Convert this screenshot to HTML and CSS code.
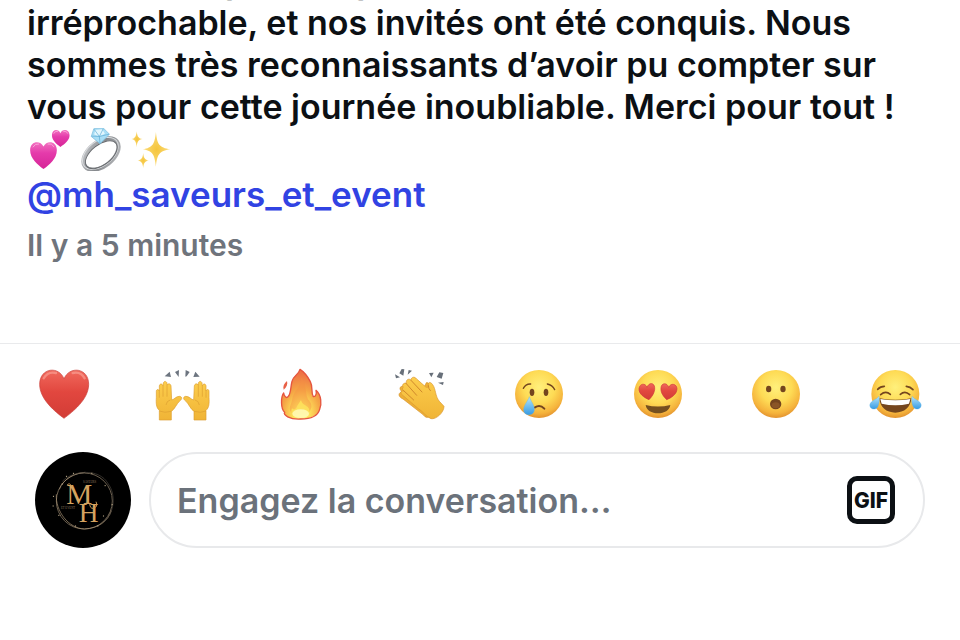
FILE: index.html
```html
<!DOCTYPE html>
<html lang="fr">
<head>
    <meta charset="UTF-8">
    <meta name="viewport" content="width=device-width, initial-scale=1.0">
    <title>Commentaires</title>
    <link rel="stylesheet" href="styles.css">
</head>
<body>
    <svg class="defs" aria-hidden="true">
        <defs>
            <linearGradient id="red" x1="0" y1="0" x2="0" y2="1">
                <stop offset="0" stop-color="#f0695c"/>
                <stop offset=".45" stop-color="#e2473f"/>
                <stop offset="1" stop-color="#d23c36"/>
            </linearGradient>
            <linearGradient id="pink" x1="0" y1="0" x2="0" y2="1">
                <stop offset="0" stop-color="#f271c0"/>
                <stop offset=".4" stop-color="#e53bab"/>
                <stop offset="1" stop-color="#d62597"/>
            </linearGradient>
            <radialGradient id="face" cx=".5" cy=".36" r=".66">
                <stop offset="0" stop-color="#fff07c"/>
                <stop offset=".5" stop-color="#fedb55"/>
                <stop offset=".82" stop-color="#f5b33c"/>
                <stop offset="1" stop-color="#df8c2c"/>
            </radialGradient>
            <linearGradient id="skin" x1="0" y1="0" x2="0" y2="1">
                <stop offset="0" stop-color="#fccd4c"/>
                <stop offset="1" stop-color="#f0b436"/>
            </linearGradient>
            <radialGradient id="flame" cx=".5" cy=".88" r=".8">
                <stop offset="0" stop-color="#fffbb0"/>
                <stop offset=".25" stop-color="#fee45c"/>
                <stop offset=".6" stop-color="#f5a545"/>
                <stop offset="1" stop-color="#ee7245"/>
            </radialGradient>
            <linearGradient id="tear" x1="0" y1="0" x2="0" y2="1">
                <stop offset="0" stop-color="#b5e4fb"/>
                <stop offset="1" stop-color="#369be3"/>
            </linearGradient>
            <linearGradient id="silver" x1="0" y1="0" x2="1" y2="1">
                <stop offset="0" stop-color="#c9cbce"/>
                <stop offset=".5" stop-color="#85888c"/>
                <stop offset="1" stop-color="#b9bbbe"/>
            </linearGradient>
            <radialGradient id="star">
                <stop offset="0" stop-color="#f5c53c"/>
                <stop offset="1" stop-color="#fbdc7c"/>
            </radialGradient>
        </defs>
    </svg>

    <main class="comment">
        <p class="comment-text">Notre mariage était grandement réussi, le service<br>irréprochable, et nos invités ont été conquis. Nous<br>sommes très reconnaissants d’avoir pu compter sur<br>vous pour cette journée inoubliable. Merci pour tout !</p>
        <div class="comment-emojis">
            <svg viewBox="21 18 138 132" role="img" aria-label="Deux cœurs">
                <path fill="url(#pink)" d="M70 144C53 131 29 112 29 86C29 58 60 54 70 75C80 54 111 58 111 86C111 112 88 131 70 144Z"/>
                <path fill="url(#pink)" d="M122 76C111 68 96 56 96 41C96 22 116 19 122 34C128 19 150 22 150 41C150 56 134 68 122 76Z"/>
                <path fill="none" stroke="#f9a3d8" stroke-width="3" stroke-linecap="round" d="M38 76Q44 65 55 67M84 67Q95 63 102 75M102 34Q106 26 113 28M132 28Q140 25 144 34"/>
            </svg>
            <svg viewBox="174 18 138 132" role="img" aria-label="Bague">
                <ellipse cx="243" cy="98" rx="62" ry="37" transform="rotate(-38 243 98)" fill="none" stroke="url(#silver)" stroke-width="13"/>
                <ellipse cx="241" cy="96" rx="63" ry="38" transform="rotate(-38 241 96)" fill="none" stroke="#dcdee0" stroke-width="3"/>
                <ellipse cx="244" cy="100" rx="57" ry="31" transform="rotate(-38 244 100)" fill="none" stroke="#6a6d71" stroke-width="3"/>
                <path fill="#a9def5" stroke="#75b9dc" stroke-width="2" d="M221 20L250 18L269 37L240 66L213 44Z"/>
                <path fill="#e2f6fd" d="M226 24L247 22L255 36L238 43L222 38Z"/>
                <path fill="none" stroke="#5aa9d2" stroke-width="2" d="M214 43L238 44L268 37M238 44L240 65M222 22L238 44L250 20"/>
            </svg>
            <svg viewBox="327 18 138 132" role="img" aria-label="Étincelles">
                <path fill="url(#star)" d="M408 30C412 68 418 78 452 83C418 88 412 98 408 137C404 98 398 88 368 83C398 78 404 68 408 30Z"/>
                <path fill="url(#star)" d="M349 28C351 46 355 50 367 52C355 54 351 58 349 77C347 58 343 54 333 52C343 50 347 46 349 28Z"/>
                <path fill="url(#star)" d="M369 95C371 112 375 116 386 118C375 120 371 124 369 141C367 124 363 120 352 118C363 116 367 112 369 95Z"/>
            </svg>
        </div>
        <a class="mention" href="#">@mh_saveurs_et_event</a>
        <time class="comment-time">Il y a 5 minutes</time>
    </main>

    <footer class="composer">
        <div class="reactions">
            <button type="button" aria-label="Cœur rouge">
                <svg viewBox="54 24 156 156">
                    <path fill="url(#red)" stroke="#c93c37" stroke-width="2" d="M132 175C108 157 59 119 59 73C59 22 118 17 132 57C147 17 206 22 206 73C206 119 156 157 132 175Z"/>
                    <path fill="none" stroke="#fa9d91" stroke-width="7" stroke-linecap="round" opacity=".7" d="M71 55Q84 33 108 39M158 39Q182 33 194 55"/>
                </svg>
            </button>
            <button type="button" aria-label="Mains levées">
                <svg viewBox="411 24 156 156">
                    <g id="hand">
                        <path fill="url(#skin)" stroke="#dc9e31" stroke-width="2" d="M418 180V151C408 143 408 128 409 113L409 94C409 87 416 87 418 93L418 78C419 70 427 70 429 78L430 69C432 62 440 63 441 70L442 75C445 69 452 71 453 78L455 120C462 119 469 108 479 109C488 111 486 118 480 122C469 132 465 147 454 154V180Z"/>
                        <path fill="none" stroke="#dc9e31" stroke-width="2" d="M418 92V113M429 78V110M441 74V110M451 120Q440 122 438 135M418 153Q434 160 454 154"/>
                    </g>
                    <use href="#hand" transform="translate(976 0) scale(-1 1)"/>
                    <path fill="#6d7580" d="M449 35L453 51L434 49ZM465 36L477 30L476 51ZM497 30L509 36L500 49L496 50ZM526 35L539 50L520 51Z"/>
                </svg>
            </button>
            <button type="button" aria-label="Feu">
                <svg viewBox="48 24 156 156">
                    <path fill="url(#flame)" stroke="#e5553f" stroke-width="4" stroke-linejoin="round" d="M125 177C91 179 71 164 77 157C65 147 65 112 74 99C76 113 84 115 88 109C96 101 95 78 99 64C103 47 119 44 123 28C136 36 146 49 154 65C163 82 155 99 163 110C171 111 173 99 171 91C188 106 188 133 182 148C177 166 156 177 125 177Z"/>
                    <path fill="#f58b44" opacity=".4" d="M126 52C148 75 134 104 151 123C162 134 159 155 139 164L102 163C84 147 97 135 99 121C104 88 129 82 126 52Z"/>
                    <path fill="#fee65b" opacity=".8" d="M126 120C130 139 148 134 151 150C151 169 136 174 124 174C104 174 92 160 99 145C105 152 112 147 114 139Z"/>
                    <ellipse cx="125" cy="161" rx="25" ry="13" fill="#fffcc0" opacity=".8"/>
                    <path fill="#e96046" d="M84 63C87 72 83 82 74 89C71 80 75 70 84 63Z"/>
                </svg>
            </button>
            <button type="button" aria-label="Applaudissements">
                <svg viewBox="402 24 156 156">
                    <path fill="#edaf36" stroke="#d7932d" stroke-width="2" d="M430 78C417 79 418 88 425 94L420 98C413 105 420 113 429 117L488 163Q501 180 511 166L506 88C515 88 509 65 499 68L491 84Z"/>
                    <path fill="url(#skin)" stroke="#d9962e" stroke-width="2" d="M430 82C424 75 432 67 439 70C437 60 445 54 453 60C454 50 464 49 470 57L495 79C500 84 506 84 505 75C504 65 512 65 518 74C528 88 525 108 538 124L552 139C552 158 528 179 513 176C496 169 488 153 475 146L427 105C419 99 424 90 433 94L428 89Q426 83 430 82Z"/>
                    <path fill="none" stroke="#d0892b" stroke-width="3" stroke-linecap="round" d="M431 92L461 120M438 70L470 106M453 61L486 96M505 77Q505 86 511 92"/>
                    <path fill="#68707a" d="M405 43L420 52L408 55ZM425 27L433 28L430 47L418 40ZM446 30L456 32L443 44ZM507 39L521 38L514 52ZM538 37L550 39L545 56L530 51ZM551 66L549 75L534 68Z"/>
                </svg>
            </button>
            <button type="button" aria-label="Visage en pleurs">
                <svg viewBox="39 24 156 156">
                    <circle cx="117" cy="102" r="72" fill="url(#face)"/>
                    <ellipse cx="96" cy="97" rx="7" ry="11" fill="#74451e"/>
                    <ellipse cx="138" cy="97" rx="7" ry="11" fill="#74451e"/>
                    <path fill="none" stroke="#74451e" stroke-width="4" stroke-linecap="round" d="M70 85Q77 71 92 72M142 72Q157 75 164 89"/>
                    <path fill="none" stroke="#74451e" stroke-width="6" stroke-linecap="round" d="M105 142Q120 132 133 146"/>
                    <path fill="url(#tear)" stroke="#58b1e8" d="M88 110C92 124 104 134 103 151C101 169 72 169 71 151C70 136 83 125 88 110Z"/>
                </svg>
            </button>
            <button type="button" aria-label="Yeux en cœur">
                <svg viewBox="396 24 156 156">
                    <circle cx="474" cy="102" r="72" fill="url(#face)"/>
                    <path fill="url(#red)" stroke="#cf3939" stroke-width="2" d="M447 119C433 113 416 102 417 86C419 70 436 68 441 82C447 66 463 68 464 83C465 98 455 111 447 119Z"/>
                    <path fill="url(#red)" stroke="#cf3939" stroke-width="2" d="M500 119C491 110 481 98 483 83C484 68 502 67 506 82C512 68 530 71 531 86C531 103 513 114 500 119Z"/>
                    <path fill="#75501f" d="M437 135Q474 144 511 135C509 151 493 160 474 160C455 160 439 151 437 135Z"/>
                </svg>
            </button>
            <button type="button" aria-label="Visage surpris">
                <svg viewBox="33 24 156 156">
                    <circle cx="111" cy="102" r="72" fill="url(#face)"/>
                    <ellipse cx="89" cy="87" rx="8" ry="10" fill="#74451e"/>
                    <ellipse cx="132" cy="87" rx="8" ry="10" fill="#74451e"/>
                    <ellipse cx="110" cy="132" rx="17" ry="16" fill="#74451e"/>
                    <ellipse cx="110" cy="136" rx="12" ry="9" fill="#8a5526"/>
                </svg>
            </button>
            <button type="button" aria-label="Larmes de joie">
                <svg viewBox="387 24 156 156">
                    <circle cx="466" cy="102" r="72" fill="url(#face)"/>
                    <path fill="none" stroke="#74451e" stroke-width="5" stroke-linecap="round" d="M413 88Q421 79 433 79M499 79Q511 80 519 89M422 104Q437 91 451 103M481 103Q495 91 509 104"/>
                    <path fill="#75461e" d="M418 115Q466 124 514 115C512 142 493 158 466 158C439 158 420 142 418 115Z"/>
                    <path fill="#fff" d="M421 117Q466 125 511 117L507 131Q466 140 425 131Z"/>
                    <path fill="url(#tear)" stroke="#58b1e8" d="M417 109C419 120 418 132 413 141C405 153 386 146 390 132C394 122 409 119 417 109ZM516 109C514 120 515 132 520 141C528 153 547 146 543 132C539 122 524 119 516 109Z"/>
                </svg>
            </button>
        </div>
        <form class="reply">
            <svg class="avatar" viewBox="30 21 288 288" role="img" aria-label="MH Saveurs et Event">
                <circle cx="174" cy="165" r="144" fill="#000"/>
                <circle cx="178" cy="168" r="84" fill="none" stroke="#6d6150" stroke-width="3"/>
                <path fill="none" stroke="#af9878" stroke-width="2" d="M94 148C91 198 130 250 178 252C221 250 249 228 259 197M103 133C115 101 151 83 181 82"/>
                <path fill="none" stroke="#4d4740" stroke-width="2" d="M112 109C140 78 222 66 250 117C273 148 269 204 237 230"/>
                <path fill="none" stroke="#cbb693" stroke-width="3" stroke-linecap="round" d="M124 94h1M145 85h1M111 117h1M200 85h1M240 122h1M84 183h1M101 211h1M151 243h1M235 213h1M218 243h1M261 179h1M85 154h1"/>
                <text class="logo-letter" x="124" y="178" font-size="88">M</text>
                <text class="logo-letter" x="161" y="232" font-size="82">H</text>
                <path fill="none" stroke="#c99955" stroke-width="3" d="M127 120Q132 111 141 124M194 175Q195 192 205 190Q220 186 213 170"/>
                <text class="logo-small" x="174" y="115">SAVEURS</text>
                <text class="logo-small" x="108" y="193">ET EVENT</text>
            </svg>
            <div class="reply-box">
                <input type="text" aria-label="Commentaire" placeholder="Engagez la conversation…">
                <button type="button" class="gif-button">GIF</button>
            </div>
        </form>
    </footer>
</body>
</html>
```
FILE: styles.css
```css
* {
    box-sizing: border-box;
}
body {
    margin: 0;
    background-color: #fff;
    color: #0c1014;
    font-family: Inter, "Liberation Sans", sans-serif;
    overflow-x: hidden;
}
.defs {
    position: absolute;
    width: 0;
    height: 0;
}
/* bottom of the scrolled comment list */
.comment {
    display: flex;
    flex-direction: column;
    align-items: flex-start;
    height: 343px;
    padding: 0 27px 80px;
    overflow: hidden;
    justify-content: flex-end;
}
.comment-text {
    margin: 0;
    font-size: 34px;
    font-weight: 600;
    line-height: 42px;
    white-space: nowrap;
}
.comment-emojis {
    display: flex;
    gap: 5px;
    padding-bottom: 1px;
}
.comment-emojis svg {
    width: 46px;
    height: 43px;
}
.mention {
    color: #3143e3;
    font-size: 35px;
    font-weight: 600;
    line-height: 44px;
    text-decoration: none;
}
.comment-time {
    color: #6f747c;
    font-size: 30px;
    font-weight: 600;
    line-height: 36px;
    padding-top: 11px;
}
.composer {
    border-top: 1px solid #e9eaec;
    padding: 24px 35px 32px;
}
.reactions {
    display: flex;
    justify-content: space-between;
    padding: 0 4px 0 3px;
}
.reactions button {
    width: 52px;
    height: 52px;
    padding: 0;
    border: 0;
    background: none;
}
.reactions svg {
    display: block;
    width: 52px;
    height: 52px;
    overflow: visible;
}
.reply {
    display: flex;
    gap: 18px;
    margin-top: 32px;
}
.avatar {
    flex: none;
    width: 96px;
    height: 96px;
}
.logo-letter {
    fill: #d5a360;
    font-family: "Liberation Serif", serif;
}
.logo-small {
    fill: #89745a;
    font-family: "Liberation Serif", serif;
    font-size: 9px;
}
.reply-box {
    display: flex;
    flex: 1;
    align-items: center;
    min-width: 0;
    height: 96px;
    padding: 0 28px 0 26px;
    border: 2px solid #e8e9eb;
    border-radius: 48px;
}
.reply-box input {
    flex: 1;
    min-width: 0;
    padding: 0;
    border: 0;
    outline: 0;
    background: none;
    color: #0c1014;
    font-family: inherit;
    font-size: 34px;
    font-weight: 600;
}
.reply-box input::placeholder {
    color: #6b727b;
    opacity: 1;
}
.gif-button {
    width: 48px;
    height: 48px;
    padding: 0;
    border: 5px solid #0c1014;
    border-radius: 10px;
    background: #fff;
    color: #0c1014;
    font-family: inherit;
    font-size: 21px;
    font-weight: 800;
}
```
